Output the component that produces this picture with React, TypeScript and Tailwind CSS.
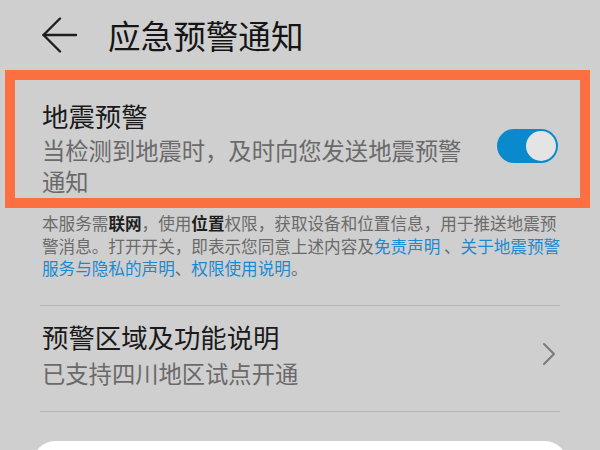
import React from "react";

function BackArrow() {
  return (
    <svg width="36" height="36" viewBox="0 0 36 36" fill="none" stroke="#1e1e1e" strokeWidth="2.4" strokeLinecap="round" strokeLinejoin="round">
      <path d="M1.5 18H34" />
      <path d="M18 1.5L1.5 18L18 34.5" />
    </svg>
  );
}

function Chevron() {
  return (
    <svg width="14" height="24" viewBox="0 0 14 24" fill="none" stroke="#7a7a7a" strokeWidth="2" strokeLinecap="round" strokeLinejoin="round">
      <path d="M2 2L12 12L2 22" />
    </svg>
  );
}

function Toggle({ on }: { on: boolean }) {
  return (
    <div className={on ? "w-[61px] h-[34px] rounded-full bg-[#0a89cc] flex items-center justify-end pr-[2px]" : "w-[61px] h-[34px] rounded-full bg-gray-400 flex items-center pl-[2px]"}>
      <div className="w-[30px] h-[30px] rounded-full bg-[#e4e4e4]" />
    </div>
  );
}

export default function App() {
  return (
    <div className="w-[600px] h-[450px] overflow-hidden bg-[#cfcfcf] font-['Noto_Sans_CJK_SC',sans-serif]">
      {/* header */}
      <div className="flex items-center h-[70px] pl-[42px]">
        <BackArrow />
        <h1 className="ml-[30px] text-[32.6px] leading-none text-[#151515]">应急预警通知</h1>
      </div>

      {/* earthquake warning switch, highlighted */}
      <div className="ml-[5px] w-[585px] h-[138px] border-[10px] border-[#fb6f40] flex items-start pl-[27px] pr-[22px]">
        <div className="pt-[19px] w-[430px]">
          <div className="text-[26.4px] leading-[34px] text-[#1a1a1a]">地震预警</div>
          <div className="mt-[2px] text-[23.3px] leading-[31px] text-[#6a6a6a]">
            当检测到地震时，及时向您发送地震预警通知
          </div>
        </div>
        <div className="ml-auto mt-[49px]">
          <Toggle on />
        </div>
      </div>

      {/* disclaimer */}
      <p className="mt-[4px] pl-[42px] w-[580px] text-[16.6px] leading-[22.5px] text-[#6a6a6a]">
        本服务需<span className="font-bold text-[#1e1e1e]">联网</span>，使用
        <span className="font-bold text-[#1e1e1e]">位置</span>权限，获取设备和位置信息，用于推送地震预
        <br />
        警消息。打开开关，即表示您同意上述内容及
        <span className="text-[#1a8ad0]">免责声明</span> 、
        <span className="text-[#1a8ad0]">关于地震预警</span>
        <br />
        <span className="text-[#1a8ad0]">服务与隐私的声明</span>、
        <span className="text-[#1a8ad0]">权限使用说明</span>。
      </p>

      {/* region item */}
      <div className="mx-[40px] mt-[25px] border-t border-b border-[#b8b8b8]">
        <div className="flex items-center pt-[14px] pb-[22px] pl-[2px] pr-[4px]">
          <div>
            <div className="text-[26.4px] leading-[34px] text-[#1a1a1a]">预警区域及功能说明</div>
            <div className="mt-[4px] text-[23.3px] leading-[31px] text-[#6a6a6a]">已支持四川地区试点开通</div>
          </div>
          <div className="ml-auto">
            <Chevron />
          </div>
        </div>
      </div>

      {/* next card */}
      <div className="mx-[33px] mt-[29px] h-[60px] rounded-[22px] bg-white" />
    </div>
  );
}
